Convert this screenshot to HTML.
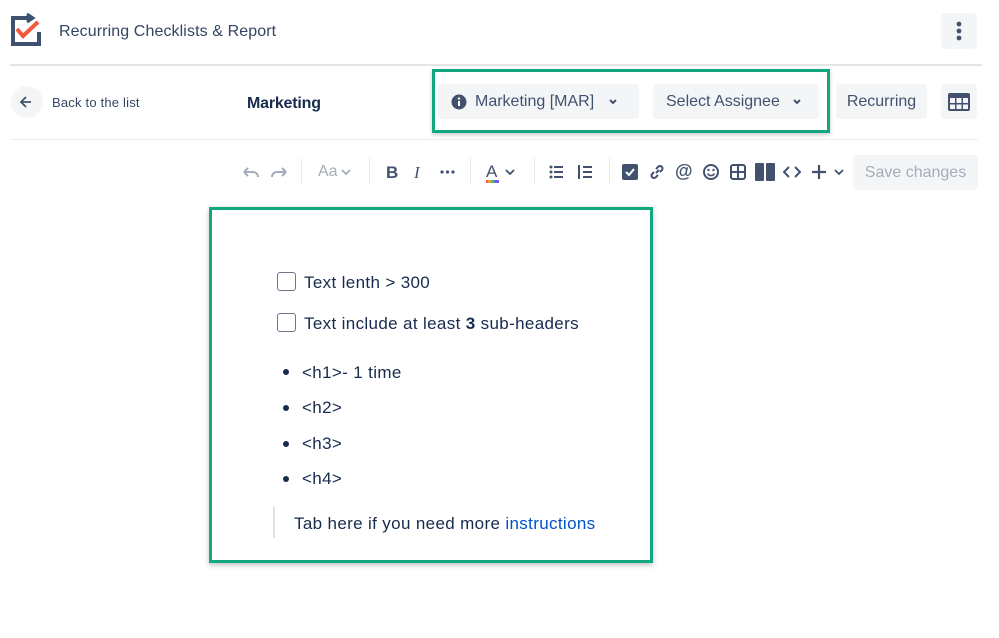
<!DOCTYPE html>
<html><head><meta charset="utf-8"><style>
*{box-sizing:border-box;margin:0;padding:0}
body{width:999px;height:638px;background:#fff;font-family:"Liberation Sans",sans-serif;color:#172b4d;position:relative;overflow:hidden}
.a{position:absolute}
.btn{position:absolute;background:#f4f5f7;border-radius:4px;display:flex;align-items:center;color:#42526e;font-size:16px}
.t{position:absolute;white-space:nowrap}
.ic{position:absolute;color:#42526e}
.ed{font-size:17px;letter-spacing:0.35px}
</style></head><body>
<svg class="a" style="left:10px;top:12px" width="34" height="36" viewBox="0 0 34 36">
<path d="M22 6H3v26h26V20" fill="none" stroke="#3d5170" stroke-width="4"/>
<path d="M17 2l6 4-6 4" fill="none" stroke="#3d5170" stroke-width="3"/>
<path d="M7 17l6 7L28 10" fill="none" stroke="#f0593a" stroke-width="4"/>
</svg>
<div class="t" style="left:59px;top:23px;font-size:16px;color:#344563;letter-spacing:0.1px">Recurring Checklists &amp; Report</div>
<div class="btn" style="left:941px;top:13px;width:36px;height:36px;justify-content:center">
<svg width="6" height="20"><circle cx="3" cy="3" r="2.4" fill="#42526e"/><circle cx="3" cy="10" r="2.4" fill="#42526e"/><circle cx="3" cy="17" r="2.4" fill="#42526e"/></svg></div>
<div class="a" style="left:10px;top:64px;width:972px;height:2px;background:#e4e5e7"></div>
<div class="a" style="left:11px;top:86px;width:32px;height:32px;border-radius:50%;background:#f4f5f7"></div>
<svg class="a" style="left:19px;top:95px" width="14" height="14"><path d="M12 7H2M7 2L2 7l5 5" fill="none" stroke="#42526e" stroke-width="1.8"/></svg>
<div class="t" style="left:52px;top:95px;font-size:13px;color:#344563;letter-spacing:0.2px">Back to the list</div>
<div class="t" style="left:247px;top:95px;font-size:16px;font-weight:bold;color:#172b4d;letter-spacing:-0.2px">Marketing</div>
<div class="a" style="left:432px;top:69px;width:398px;height:64px;border:3px solid #12a77e;box-shadow:0 2px 4px rgba(0,0,0,.2)"></div>
<div class="btn" style="left:438px;top:84px;width:201px;height:35px;padding-left:13px">
<svg width="16" height="16"><circle cx="8" cy="8" r="7.5" fill="#42526e"/><rect x="7" y="7" width="2" height="5" fill="#fff"/><circle cx="8" cy="4.6" r="1.2" fill="#fff"/></svg>
<span style="margin-left:8px">Marketing [MAR]</span>
<svg style="margin-left:14px" width="10" height="8"><path d="M2 2l3 3 3-3" fill="none" stroke="#42526e" stroke-width="2"/></svg></div>
<div class="btn" style="left:653px;top:84px;width:166px;height:35px;padding-left:13px">
<span>Select Assignee</span>
<svg style="margin-left:12px" width="10" height="8"><path d="M2 2l3 3 3-3" fill="none" stroke="#42526e" stroke-width="2"/></svg></div>
<div class="btn" style="left:836px;top:84px;width:91px;height:35px;justify-content:center">Recurring</div>
<div class="btn" style="left:941px;top:84px;width:36px;height:35px;justify-content:center">
<svg width="22" height="18"><rect x="0" y="0" width="22" height="18" rx="2" fill="#42526e"/><g fill="#f4f5f7"><rect x="2" y="5" width="5" height="5"/><rect x="8.5" y="5" width="5" height="5"/><rect x="15" y="5" width="5" height="5"/><rect x="2" y="11.5" width="5" height="4.5"/><rect x="8.5" y="11.5" width="5" height="4.5"/><rect x="15" y="11.5" width="5" height="4.5"/></g></svg></div>
<div class="a" style="left:10px;top:139px;width:968px;height:1px;background:#ebecf0"></div>
<!-- toolbar -->
<svg class="a" style="left:240px;top:163px" width="50" height="20"><path d="M4 9h9a5 5 0 015 5M4 9l4-4M4 9l4 4" fill="none" stroke="#a5adba" stroke-width="2"/><path d="M46 9h-9a5 5 0 00-5 5M46 9l-4-4M46 9l-4 4" fill="none" stroke="#a5adba" stroke-width="2"/></svg>
<div class="a" style="left:301px;top:158px;width:1px;height:26px;background:#ebecf0"></div>
<div class="t" style="left:318px;top:163px;font-size:16px;color:#a5adba">Aa</div>
<svg class="a" style="left:341px;top:168px" width="10" height="8"><path d="M1 2l4 4 4-4" fill="none" stroke="#a5adba" stroke-width="1.8"/></svg>
<div class="a" style="left:369px;top:158px;width:1px;height:26px;background:#ebecf0"></div>
<div class="t" style="left:386px;top:163px;font-size:17px;font-weight:bold;color:#42526e">B</div>
<div class="t" style="left:414px;top:163px;font-size:17px;font-style:italic;color:#42526e;font-family:'Liberation Serif',serif">I</div>
<svg class="a" style="left:440px;top:170px" width="15" height="4"><circle cx="2" cy="2" r="1.6" fill="#42526e"/><circle cx="7.5" cy="2" r="1.6" fill="#42526e"/><circle cx="13" cy="2" r="1.6" fill="#42526e"/></svg>
<div class="a" style="left:470px;top:158px;width:1px;height:26px;background:#ebecf0"></div>
<div class="t" style="left:486px;top:162px;font-size:17px;color:#42526e">A</div>
<div class="a" style="left:486px;top:180px;width:13px;height:3px;background:linear-gradient(90deg,#e44,#fa3,#5b5,#46f,#a4e)"></div>
<svg class="a" style="left:505px;top:168px" width="10" height="8"><path d="M1 2l4 4 4-4" fill="none" stroke="#42526e" stroke-width="1.8"/></svg>
<div class="a" style="left:534px;top:158px;width:1px;height:26px;background:#ebecf0"></div>
<svg class="a" style="left:548px;top:164px" width="44" height="16"><g fill="#42526e"><circle cx="3" cy="3" r="1.5"/><circle cx="3" cy="8" r="1.5"/><circle cx="3" cy="13" r="1.5"/><rect x="6" y="2" width="9" height="2"/><rect x="6" y="7" width="9" height="2"/><rect x="6" y="12" width="9" height="2"/><rect x="35" y="2" width="9" height="2"/><rect x="35" y="7" width="9" height="2"/><rect x="35" y="12" width="9" height="2"/><rect x="30" y="1" width="2" height="14"/></g></svg>
<div class="a" style="left:609px;top:158px;width:1px;height:26px;background:#ebecf0"></div>
<svg class="a" style="left:622px;top:164px" width="16" height="16"><rect width="16" height="16" rx="2" fill="#42526e"/><path d="M4 8l3 3 5-6" fill="none" stroke="#fff" stroke-width="2"/></svg>
<svg class="a" style="left:648px;top:163px" width="18" height="18"><path d="M8 10l3-3M6 9l-2 2a2.5 2.5 0 003.5 3.5L10 12M12 9l2-2a2.5 2.5 0 00-3.5-3.5L8 6" fill="none" stroke="#42526e" stroke-width="2"/></svg>
<div class="t" style="left:675px;top:161px;font-size:18px;color:#42526e;font-weight:bold">@</div>
<svg class="a" style="left:702px;top:163px" width="18" height="18"><circle cx="9" cy="9" r="7" fill="none" stroke="#42526e" stroke-width="2"/><circle cx="6.5" cy="7" r="1.2" fill="#42526e"/><circle cx="11.5" cy="7" r="1.2" fill="#42526e"/><path d="M5.5 10.5a4 4 0 007 0" fill="none" stroke="#42526e" stroke-width="1.6"/></svg>
<svg class="a" style="left:730px;top:164px" width="16" height="16"><rect x="1" y="1" width="14" height="14" rx="2" fill="none" stroke="#42526e" stroke-width="2"/><path d="M8 1v14M1 8h14" stroke="#42526e" stroke-width="2"/></svg>
<svg class="a" style="left:755px;top:163px" width="20" height="18"><rect x="0" y="0" width="9" height="18" rx="1" fill="#42526e"/><rect x="11" y="0" width="9" height="18" rx="1" fill="#42526e"/></svg>
<svg class="a" style="left:783px;top:164px" width="18" height="16"><path d="M6 3L1 8l5 5M12 3l5 5-5 5" fill="none" stroke="#42526e" stroke-width="2"/></svg>
<svg class="a" style="left:811px;top:164px" width="34" height="16"><path d="M8 1v14M1 8h14" stroke="#42526e" stroke-width="2.2"/><path d="M24 6l4 4 4-4" fill="none" stroke="#42526e" stroke-width="1.8"/></svg>
<div class="btn" style="left:853px;top:155px;width:125px;height:35px;justify-content:center;color:#a5adba">Save changes</div>
<!-- editor -->
<div class="a" style="left:209px;top:207px;width:444px;height:356px;border:3px solid #12a77e;box-shadow:0 2px 5px rgba(0,0,0,.25)"></div>
<div class="a" style="left:277px;top:272px;width:19px;height:19px;border:1.5px solid #6b778c;border-radius:3px"></div>
<div class="t ed" style="left:304px;top:273px">Text lenth &gt; 300</div>
<div class="a" style="left:277px;top:313px;width:19px;height:19px;border:1.5px solid #6b778c;border-radius:3px"></div>
<div class="t ed" style="left:304px;top:314px">Text include at least <b>3</b> sub-headers</div>
<div class="a" style="left:283px;top:369px;width:6px;height:6px;border-radius:50%;background:#172b4d"></div>
<div class="t ed" style="left:302px;top:363px">&lt;h1&gt;- 1 time</div>
<div class="a" style="left:283px;top:405px;width:6px;height:6px;border-radius:50%;background:#172b4d"></div>
<div class="t ed" style="left:302px;top:398px">&lt;h2&gt;</div>
<div class="a" style="left:283px;top:441px;width:6px;height:6px;border-radius:50%;background:#172b4d"></div>
<div class="t ed" style="left:302px;top:434px">&lt;h3&gt;</div>
<div class="a" style="left:283px;top:476px;width:6px;height:6px;border-radius:50%;background:#172b4d"></div>
<div class="t ed" style="left:302px;top:469px">&lt;h4&gt;</div>
<div class="a" style="left:273px;top:507px;width:2px;height:31px;background:#dfe1e6"></div>
<div class="t ed" style="left:294px;top:514px">Tab here if you need more <span style="color:#0052cc">instructions</span></div>
</body></html>
